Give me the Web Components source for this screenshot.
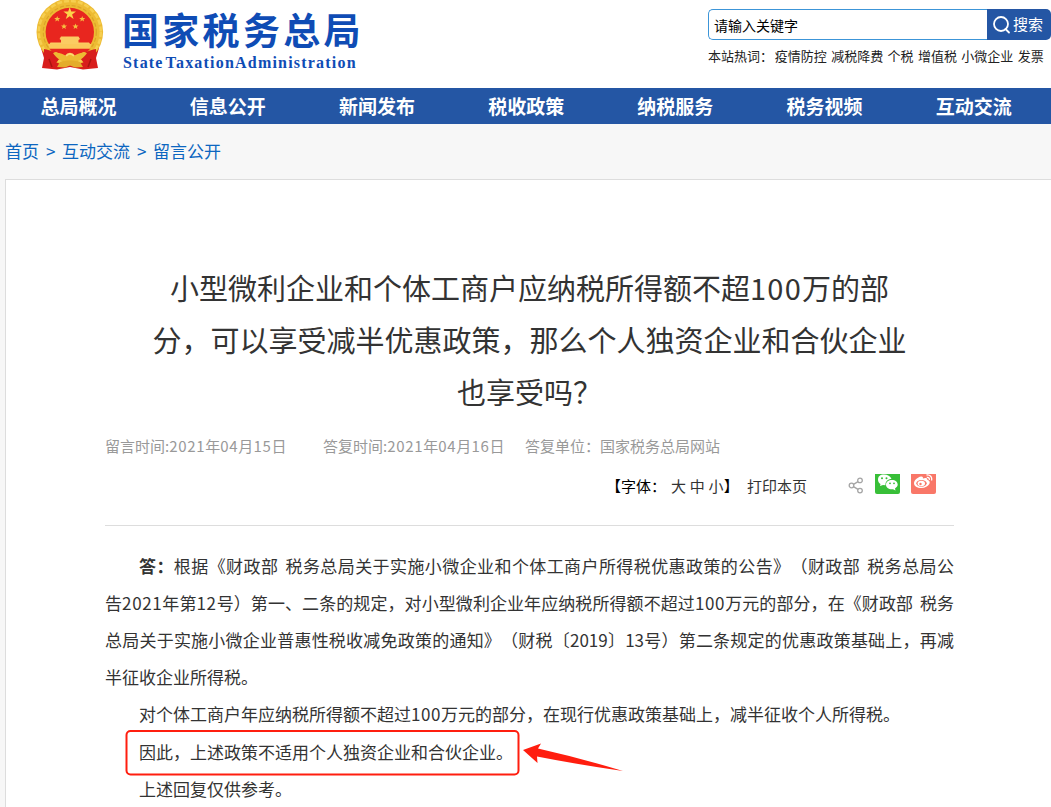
<!DOCTYPE html>
<html lang="zh-CN">
<head>
<meta charset="utf-8">
<title>国家税务总局</title>
<style>
	body {
		margin: 0;
		width: 1051px;
		height: 807px;
		overflow: hidden;
		background: #f7f7f7;
		color: #333;
		font-family: "Noto Sans CJK SC", sans-serif;
		text-spacing-trim: space-all;
	}
</style>
</head>
<body>
<tax-page></tax-page>

<script>
'use strict'

function define(name, html) {
  const template = document.createElement('template');
  template.innerHTML = html;
  customElements.define(name, class extends HTMLElement {
    constructor() {
      super();
      this.attachShadow({ mode: 'open' });
      this.shadowRoot.appendChild(template.content.cloneNode(true));
    }
  });
}

define('state-emblem', `
<style>
	:host { display: block; width: 68px; height: 72px; }
	svg { display: block; }
</style>
<svg width="68" height="72" viewBox="0 0 68 72">
	<path d="M5 48L14 50L54 50L63 48L60 58L62 68L47 69.500L34 67L21 69.500L6 68L8 58Z" fill="#d81e1c"/>
	<circle cx="33.800" cy="32" r="33.300" fill="#edbb33"/>
	<circle cx="33.800" cy="32" r="31" fill="none" stroke="#f6cf50" stroke-width="2.500" stroke-dasharray="5 2"/>
	<circle cx="33.800" cy="32" r="26.500" fill="none" stroke="#dba428" stroke-width="1.200" stroke-dasharray="4 2"/>
	<circle cx="33.800" cy="32" r="24.200" fill="#e8261f"/>
	<path d="M33.700 7L35.200 11.600H40L36.100 14.400L37.600 19L33.700 16.200L29.800 19L31.300 14.400L27.400 11.600H32.200Z" fill="#fbd34a"/>
	<g fill="#f6c040">
		<path d="M21.200 16l.8 2h2.200l-1.700 1.400.6 2.200-1.900-1.300-1.900 1.300.6-2.200-1.700-1.400h2.200z"/>
		<path d="M46.200 16l.8 2h2.200l-1.700 1.400.6 2.200-1.900-1.300-1.900 1.300.6-2.200-1.700-1.400h2.200z"/>
		<path d="M28 23.500l.8 2h2.200l-1.700 1.400.6 2.200-1.900-1.300-1.900 1.300.6-2.200-1.700-1.400h2.200z"/>
		<path d="M39.500 23.500l.8 2h2.200l-1.700 1.400.6 2.200-1.900-1.300-1.900 1.300.6-2.200-1.700-1.400h2.200z"/>
	</g>
	<path d="M25 36.500h17.500l1.500 2.500-1.500 1v2.500h10.500l1.500 2H13l1.500-2H25V40l-1.500-1z" fill="#fbcb62"/>
	<path d="M12 44h43.500l-2 5H14z" fill="#fbc75a"/>
	<path d="M13.500 48.800h40.500l-3 3.500-8-.5-6 1.700h-6.500l-6-1.700-8 .5z" fill="#e8261f"/>
	<path d="M8 49c7 1 13 4 16 9l-4 5-12-3zM60 49c-7 1-13 4-16 9l4 5 12-3z" fill="#d81e1c"/>
	<path d="M17 53c6-1 10 1 13 3 2-3 6-3 8 0 3-2 7-4 13-3-3 5-8 8-12 8h-10c-4 0-9-3-12-8z" fill="#edbb33"/>
	<path d="M30 56c2-3 6-3 8 0" fill="none" stroke="#fbdb6c" stroke-width="2"/>
	<path d="M24 62c6-2 14-2 20 0l3 5-8 .5-5-2-5 2-8-.5z" fill="#e4ad2b"/>
	<path d="M13 59l3 8M55 59l-3 8" stroke="#a9150f" stroke-width="1.500"/>
</svg>`);

define('search-box', `
<style>
	:host { display: flex; height: 31px; width: 343px; }
	.field {
		box-sizing: border-box;
		width: 279px;
		border: 1px solid #3c95d8;
		border-right: 0;
		border-radius: 5px 0 0 5px;
		background: #fff;
		padding-left: 5px;
		color: #000;
		font-size: 14px;
		line-height: 30px;
	}
	.button {
		display: flex;
		align-items: center;
		width: 64px;
		box-sizing: border-box;
		padding-left: 5px;
		gap: 2px;
		border-radius: 0 5px 5px 0;
		background: #2456a4;
		color: #fff;
		font-size: 15px;
		line-height: 29px;
	}
	.button span { padding-bottom: 2px; }
</style>
<div class="field">请输入关键字</div>
<div class="button">
	<svg width="19" height="20" viewBox="0 0 19 20" fill="none" stroke="#fff" stroke-width="1.800">
		<circle cx="9" cy="9" r="7"/>
		<path d="M13.500 14l3.500 3.500" stroke-linecap="round"/>
	</svg>
	<span>搜索</span>
</div>`);

define('site-header', `
<style>
	:host {
		display: flex;
		justify-content: space-between;
		height: 88px;
		background: #fff;
	}
	.brand { display: flex; padding-left: 36px; }
	.names { padding: 9px 0 0 18px; color: #0f4cb5; white-space: nowrap; }
	.cn {
		height: 44px;
		font-size: 37px;
		line-height: 41px;
		font-weight: 700;
		letter-spacing: 3.300px;
	}
	.en {
		font: bold 16px/19px "Liberation Serif", serif;
		letter-spacing: 1.200px;
		word-spacing: -3px;
		padding-left: 1px;
	}
	.side { width: 343px; padding-top: 9px; }
	.hot {
		display: flex;
		gap: 4.400px;
		padding-top: 6px;
		color: #222;
		font-size: 13px;
		line-height: 19px;
		white-space: nowrap;
	}
	.hot span:first-child { margin-right: -2.700px; }
</style>
<div class="brand">
	<state-emblem></state-emblem>
	<div class="names">
		<div class="cn">国家税务总局</div>
		<div class="en">State TaxationAdministration</div>
	</div>
</div>
<div class="side">
	<search-box></search-box>
	<div class="hot">
		<span>本站热词：</span><span>疫情防控</span><span>减税降费</span><span>个税</span><span>增值税</span><span>小微企业</span><span>发票</span>
	</div>
</div>`);

define('nav-bar', `
<style>
	:host {
		display: grid;
		grid-template-columns: repeat(7, 149.200px);
		height: 36px;
		padding-left: 4px;
		background: #2456a4;
		overflow: hidden;
	}
	::slotted(a) {
		color: #fff;
		font-size: 19px;
		line-height: 36px;
		font-weight: 700;
		text-align: center;
	}
</style>
<slot></slot>`);

define('bread-crumb', `
<style>
	:host {
		display: flex;
		gap: 7px;
		height: 55px;
		padding-left: 5px;
		color: #0c66c0;
		font-size: 17px;
		line-height: 54px;
	}
	i { font-style: normal; width: 9px; }
</style>
<span>首页</span><i>&gt;</i><span>互动交流</span><i>&gt;</i><span>留言公开</span>`);

define('share-icons', `
<style>
	:host { display: flex; align-items: flex-start; }
	svg { display: block; }
	.share { margin: 3px 11px 0 0; }
	.wechat { margin-right: 11px; }
</style>
<svg class="share" width="16" height="17" viewBox="0 0 16 17" fill="none" stroke="#a5a5a5" stroke-width="1.300">
	<circle cx="3.500" cy="8.500" r="2.300"/>
	<circle cx="12" cy="3.400" r="2.300"/>
	<circle cx="12" cy="13.600" r="2.300"/>
	<path d="M5.500 7.400l4.500-2.800M5.500 9.600l4.500 2.800"/>
</svg>
<svg class="wechat" width="25" height="20" viewBox="0 0 25 20">
	<path d="M0 0H25V18Q25 20 23 20H2Q0 20 0 18Z" fill="#38bf38"/>
	<path d="M9 .5C5 .5 3 2.500 3 5.500c0 2 1 3.500 2.500 4.500l-.5 2 3-1 2.500.3C10 7.500 13 5 16.500 5 15.500 2 12.500.5 9 .5z" fill="#fff"/>
	<path d="M17 6c-3.500 0-6 2.100-6 4.700 0 2.800 2.800 4.900 7 4.500l2.500 1.200-.5-2c1.500-.9 2.700-2.200 2.700-3.800C22.700 8 20.400 6 17 6z" fill="#fff"/>
	<g fill="#38bf38">
		<circle cx="7" cy="4.300" r="1"/><circle cx="11.500" cy="4.300" r="1"/>
		<circle cx="15" cy="9.300" r=".9"/><circle cx="19" cy="9.300" r=".9"/>
	</g>
</svg>
<svg width="25" height="20" viewBox="0 0 25 20">
	<path d="M0 0H25V18Q25 20 23 20H2Q0 20 0 18Z" fill="#f97768"/>
	<path d="M10 2.500c1.500-.3 2.200.5 1.900 2 2.200-.8 4.700-.8 4.400 1.300 2.300.8 3 2.500 2 4.200-1.300 2.200-4 4-8 4-4.200 0-7.300-2-7.300-4.800C3 6.500 6.500 3 10 2.500z" fill="#fff"/>
	<ellipse cx="10.500" cy="9.300" rx="5.200" ry="3.400" fill="#f97768"/>
	<ellipse cx="10.300" cy="9.500" rx="3.700" ry="2.800" fill="#fff"/>
	<circle cx="9.500" cy="10" r="1.200" fill="#f97768"/>
	<path d="M15.500 1c3.500-.6 6 2 5 5.500M15.800 3.400c1.800-.3 2.900.9 2.500 2.500" fill="none" stroke="#fff" stroke-width="1.300"/>
</svg>`);

define('article-meta', `
<style>
	:host {
		display: flex;
		height: 30px;
		color: #999;
		font-size: 15px;
		line-height: 30px;
		white-space: nowrap;
	}
	::slotted(span:nth-child(1)) { width: 218px; }
	::slotted(span:nth-child(2)) { width: 202px; }
</style>
<slot></slot>`);

define('article-tools', `
<style>
	:host {
		display: flex;
		justify-content: flex-end;
		height: 51px;
		padding: 13px 18px 0 0;
		border-bottom: 1px solid #ddd;
		font-size: 15px;
		line-height: 24px;
		white-space: nowrap;
	}
	.size { color: #000; width: 65px; }
	.size + span { width: 18.800px; }
	.m { width: 18.800px; }
	.s { width: 38.400px; }
	.s b { font-weight: 400; color: #000; }
	.print { width: 101px; }
</style>
<span class="size">【字体：</span><span>大</span><span class="m">中</span><span class="s">小<b>】</b></span><span class="print">打印本页</span>
<share-icons></share-icons>`);

define('article-line', `
<style>
	:host {
		display: block;
		position: relative;
		font-size: 17px;
		line-height: 37.200px;
		white-space: nowrap;
		word-spacing: 3px;
	}
	:host([indent]) { padding-left: 34px; }
	:host([full]) { text-align: justify; text-align-last: justify; white-space: normal; }
</style>
<slot></slot>`);

define('red-mark', `
<style>
	:host { position: absolute; left: 20px; top: -3.600px; }
	svg { display: block; }
</style>
<svg width="500" height="48" viewBox="0 0 500 48">
	<rect x="1.500" y="2" width="392" height="43.500" rx="4" fill="none" stroke="#ff1e0f" stroke-width="2"/>
	<path d="M398 21L416 14.500L413 19.500Q455 29 498 42Q450 35 412 27.500L412.500 34Z" fill="#ff1e0f"/>
</svg>`);

define('article-panel', `
<style>
	:host {
		display: block;
		box-sizing: border-box;
		width: 1060px;
		height: 640px;
		margin-left: 5px;
		padding: 81px 0 0 99px;
		border: 1px solid #ddd;
		background: #fff;
	}
	main { width: 849px; }
	h1 {
		margin: 0 0 14px;
		color: #333;
		font-size: 29px;
		line-height: 52px;
		font-weight: 400;
		text-align: center;
		white-space: nowrap;
	}
	i { font-style: normal; }
	h1 i { letter-spacing: 1.200px; }
	article-meta i { letter-spacing: 0.700px; }
	article-line i { letter-spacing: 0.600px; }
	.answer { padding-top: 20.600px; }
</style>
<main>
	<h1>小型微利企业和个体工商户应纳税所得额不超<i>100</i>万的部<br>分，可以享受减半优惠政策，那么个人独资企业和合伙企业<br>也享受吗？</h1>
	<article-meta>
		<span>留言时间:<i>2021</i>年<i>04</i>月<i>15</i>日</span><span>答复时间:<i>2021</i>年<i>04</i>月<i>16</i>日</span><span>答复单位：国家税务总局网站</span>
	</article-meta>
	<article-tools></article-tools>
	<div class="answer">
		<article-line indent full><b>答：</b>根据《财政部 税务总局关于实施小微企业和个体工商户所得税优惠政策的公告》（财政部 税务总局公</article-line>
		<article-line full>告<i>2021</i>年第<i>12</i>号）第一、二条的规定，对小型微利企业年应纳税所得额不超过<i>100</i>万元的部分，在《财政部 税务</article-line>
		<article-line full>总局关于实施小微企业普惠性税收减免政策的通知》（财税〔2019〕13号）第二条规定的优惠政策基础上，再减</article-line>
		<article-line>半征收企业所得税。</article-line>
		<article-line indent>对个体工商户年应纳税所得额不超过<i>100</i>万元的部分，在现行优惠政策基础上，减半征收个人所得税。</article-line>
		<article-line indent>因此，上述政策不适用个人独资企业和合伙企业。<red-mark></red-mark></article-line>
		<article-line indent>上述回复仅供参考。</article-line>
	</div>
</main>`);

define('tax-page', `
<style>
	:host { display: block; }
</style>
<site-header></site-header>
<nav-bar>
	<a>总局概况</a><a>信息公开</a><a>新闻发布</a><a>税收政策</a><a>纳税服务</a><a>税务视频</a><a>互动交流</a>
</nav-bar>
<bread-crumb></bread-crumb>
<article-panel></article-panel>`);
</script>
</body>
</html>
